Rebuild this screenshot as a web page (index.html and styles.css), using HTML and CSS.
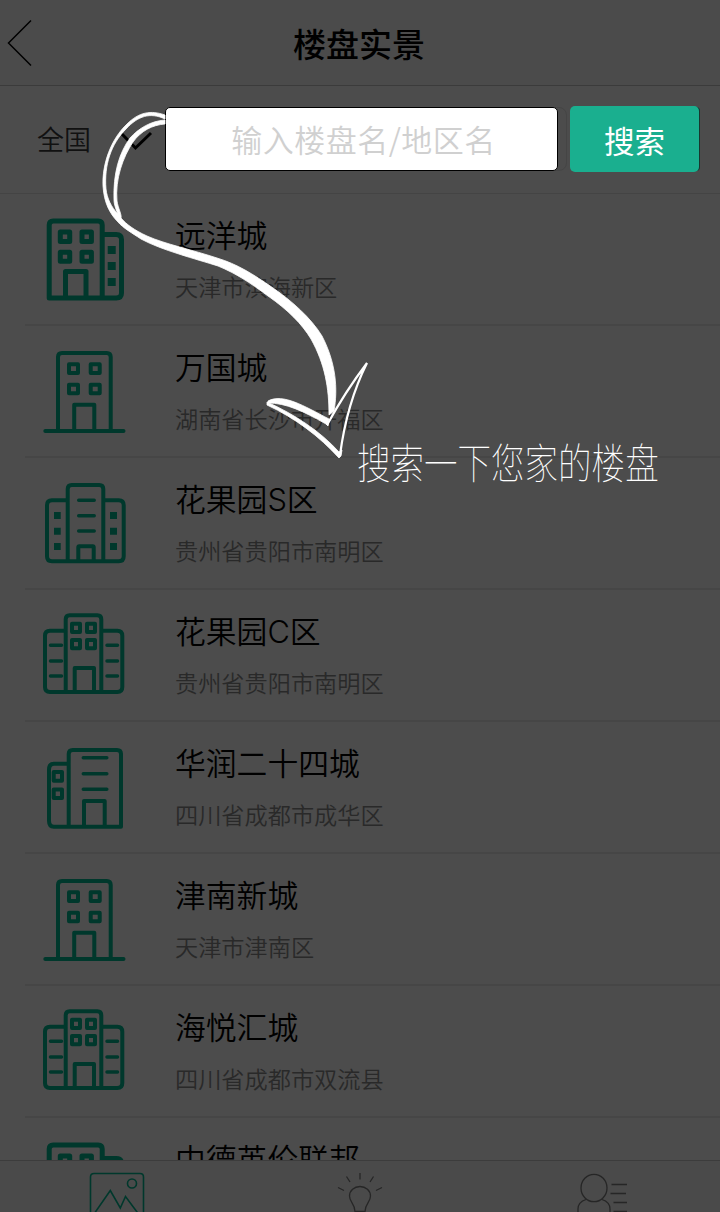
FILE: index.html
```
<!DOCTYPE html>
<html lang="zh-CN">
<head>
<meta charset="utf-8">
<title>楼盘实景</title>
<link rel="stylesheet" href="styles.css">
</head>
<body>
<svg class="symbols" aria-hidden="true">
  <symbol id="annex" viewBox="0 0 88 88"><path d="M8.200 84V11q0-4 4-4h45q4 0 4 4v73M61.200 20.500h14q5.300 0 5.300 5V79q0 5-5.300 5H11q-2.800 0-2.800-2M24.500 84V57.500H45V84"/><path d="M19.300 18h9.400v9.400h-9.400zM41 18h9.400v9.400H41zM19.300 38.200h9.400v9h-9.400zM41 38.200h9.400v9H41z"/><path class="solid" d="M66.700 32h8v8h-8zM66.700 48h8v8h-8zM66.700 64h8v8h-8z"/></symbol>
  <symbol id="tower" viewBox="0 0 88 88"><path class="thin" d="M4.300 85h78.200M17 85V11q0-4 4-4h44.700q4 0 4 4v74M33.200 85V58.700h20.100V85M28 18.300h9v8.700h-9zM49.700 18.300h9v8.700h-9zM28 38.700h9v8.600h-9zM49.700 38.700h9v8.600h-9z"/></symbol>
  <symbol id="triple" viewBox="0 0 88 88"><path class="thin" d="M26.700 83V11q0-4 4-4h27.600q4 0 4 4v72M26.700 22.300H11q-5 0-5 5v51q0 5 5 5h66.700q5 0 5-5v-51q0-5-5-5H62.300M37.300 83V69.300q0-1 1-1h13.400q1 0 1 1V83"/><path class="line" d="M37.700 22.300h15.500M37.700 37.700h15.500M37.700 53h15.500"/><path class="solid" d="M13 34h6.700v7H13zM13 49.700h6.700v7H13zM13 65h6.700v7H13zM69 34h7v7h-7zM69 49.700h7v7h-7zM69 65h7v7h-7z"/></symbol>
  <symbol id="wings" viewBox="0 0 88 88"><path class="thin" d="M24.700 82V9.300q0-4 4-4h27.600q4 0 4 4V82M24.700 20.700H9q-5 0-5 5V77q0 5 5 5h67.300q5 0 5-5V25.700q0-5-5-5h-16M33.700 82V58H53v24M31 13.700h8V22h-8zM46 13.700h8V22h-8zM31 30h8v8.300h-8zM46 30h8v8.300h-8z"/><path class="line" d="M9.500 35.300h11M9.500 51h11M9.500 66h11M66 35.300h10.500M66 51h10.500M66 66h10.500"/></symbol>
  <symbol id="office" viewBox="0 0 88 88"><path class="thin" d="M27.700 84V12q0-4 4-4H76q4 0 4 4v72.700H13q-5 0-5-6v-51q0-6 5-6h14.700M43 84V59h20.700v25M12.700 30h8.300v8.700h-8.300zM12.700 47.500h8.300V56h-8.300z"/><path class="line" d="M42.300 15.700h23.500M42.300 31.700h23.500M42.300 47.300h23.500"/></symbol>
</svg>
<div class="screen">
  <header class="header">
    <svg class="back" viewBox="0 0 40 60"><path d="M31 7.500L8.500 30L31 52.500"/></svg>
    <h1 class="title">楼盘实景</h1>
  </header>
  <div class="search">
    <span class="region">全国</span>
    <svg class="chevron" viewBox="0 0 36 24"><path d="M3 4l14.500 15L33 4"/></svg>
    <div class="field"><input class="input" placeholder="输入楼盘名/地区名" aria-label="搜索楼盘"></div>
    <button class="submit">搜索</button>
  </div>
  <main class="list">
    <div class="item"><svg class="building"><use href="#annex"/></svg><div><div class="name">远洋城</div><div class="place">天津市滨海新区</div></div></div>
    <div class="item"><svg class="building"><use href="#tower"/></svg><div><div class="name">万国城</div><div class="place">湖南省长沙市开福区</div></div></div>
    <div class="item"><svg class="building"><use href="#triple"/></svg><div><div class="name">花果园S区</div><div class="place">贵州省贵阳市南明区</div></div></div>
    <div class="item"><svg class="building"><use href="#wings"/></svg><div><div class="name">花果园C区</div><div class="place">贵州省贵阳市南明区</div></div></div>
    <div class="item"><svg class="building"><use href="#office"/></svg><div><div class="name">华润二十四城</div><div class="place">四川省成都市成华区</div></div></div>
    <div class="item"><svg class="building"><use href="#tower"/></svg><div><div class="name">津南新城</div><div class="place">天津市津南区</div></div></div>
    <div class="item"><svg class="building"><use href="#wings"/></svg><div><div class="name">海悦汇城</div><div class="place">四川省成都市双流县</div></div></div>
    <div class="item"><svg class="building"><use href="#annex"/></svg><div><div class="name">中德英伦联邦</div></div></div>
  </main>
  <nav class="tabs">
    <svg class="tab active" viewBox="0 0 240 51"><path d="M90.500 60V16q0-3.500 3.500-3.500h46q3.500 0 3.500 3.500v44M94 53l16.300-23.500 10 17.500 5.200-11.500L140 55"/><circle cx="132" cy="22.500" r="4.500"/></svg>
    <svg class="tab" viewBox="0 0 240 51"><path d="M115 50.500c0-8-5.500-9-5.500-15.500a10.500 9.500 0 0 1 21 0c0 6.500-5.500 7.500-5.500 15.500zM120 12v6.500M106.500 15.500l3.500 5.500M133.500 15.500L130 21M98 26.500l6 3M142 26.500l-6 3"/></svg>
    <svg class="tab" viewBox="0 0 240 51"><ellipse cx="114" cy="27" rx="13" ry="13.700"/><path d="M98 60V48q0-7 8-9.500M130 60V48q0-7-8-9.500M131.500 23.500H147M130.500 32.500H146M133.500 41.500H147M133.500 50.500H147"/></svg>
  </nav>
  <div class="guide">
    <svg class="arrow" viewBox="0 0 720 500">
      <path d="M165 115C151 110 139 112 127 124C111 139 102 164 103 186C104 203 110 214 118 222C123 228 132 233 141 239C161 250 196 259 218 266C237 274 249 282 268 296C288 310 302 324 311 339C325 364 329 388 329 415L334 411C338 389 336 363 322 336C311 318 292 301 273 288C253 274 237 264 217 258C193 250 165 244 147 236C134 230 126 224 121 218C122 215 118 208 117 201C115 179 123 157 133 142C141 131 152 125 165 124V120C151 121 139 128 130 138C119 153 113 174 114 200C114 205 117 212 118 214C111 207 107 198 106 189C104 165 111 144 126 129C138 116 150 112 165 119Z"/>
      <path d="M268 401C283 393 304 406 329 419L328 426L326 424C303 411 286 403 268 403Z"/>
      <path d="M267 402C294 414 320 431 339 452L342 450L341 456L339 458C319 436 295 418 267 405Z"/>
      <path class="sketch" d="M327 425Q345 392 367 363C352 393 344 425 340 455"/>
    </svg>
    <div class="hint">搜索一下您家的楼盘</div>
  </div>
</div>
</body>
</html>
```
FILE: styles.css
```
* { box-sizing: border-box; }
body { margin: 0; background: #4c4c4c; font-family: Inter, "Noto Sans CJK SC", sans-serif; }
.symbols { position: absolute; width: 0; height: 0; }
.screen { position: relative; width: 720px; height: 1212px; overflow: hidden; display: flex; flex-direction: column; background: #4c4c4c; }
svg { fill: none; }
.header { height: 86px; flex: none; display: grid; grid-template-columns: 40px 1fr 40px; align-items: center; border-bottom: 1px solid #3b3b3b; background: #4b4b4b; }
.back { width: 40px; height: 60px; stroke: #000; stroke-width: 1.5; }
.title { margin: 4px 2px 0 0; font-size: 33px; line-height: 48px; font-weight: 500; text-align: center; color: #000; }
.search { height: 108px; flex: none; display: flex; align-items: center; padding: 0 0 2px 37px; border-bottom: 1px solid #444; }
.region { width: 81px; padding-top: 4px; font-size: 27px; line-height: 40px; color: #111; font-weight: 350; }
.chevron { width: 36px; height: 24px; margin: 4px 11px 0 0; stroke: #000; stroke-width: 3; }
.field { width: 402px; height: 64px; border: 1px solid #454545; border-radius: 8px; margin-right: 3px; }
.input { display: block; width: 393px; height: 64px; margin: -1px 0 0 -1px; border: 1px solid #000; border-radius: 5px; padding: 0 0 0 4px; background: #fff; font: 350 31px "Noto Sans CJK SC", sans-serif; letter-spacing: .5px; text-align: center; }
.input::placeholder { color: #d0d0d0; opacity: 1; }
.submit { width: 129px; height: 66px; padding: 2px 0 0; border: 0; border-radius: 5px; background: #1aaf8f; box-shadow: 2px 0 0 -1px #17382f; font: 400 30.500px/40px "Noto Sans CJK SC", sans-serif; color: #fff; }
.list { flex: 1; min-height: 0; overflow: hidden; padding-left: 25px; }
.item { height: 132px; display: flex; align-items: flex-start; padding: 20px 0 0 16px; border-bottom: 2px solid #464646; }
.building { flex: none; width: 88px; height: 88px; margin-right: 46px; stroke: #00382c; stroke-width: 5; stroke-linecap: round; stroke-linejoin: round; }
.thin { stroke-width: 4; }
.line { stroke-width: 3.500px; }
.solid { fill: #00382c; stroke: none; }
.name { font-size: 30.800px; line-height: 44px; font-weight: 350; color: #000; }
.place { margin-top: 13px; font-size: 23.200px; line-height: 34px; font-weight: 350; color: #292929; }
.tabs { height: 52px; flex: none; display: grid; grid-template-columns: repeat(3, 1fr); border-top: 1px solid #3c3c3c; background: #4a4a4a; }
.tab { width: 240px; height: 51px; stroke: #262626; stroke-width: 1.300; }
.active { stroke: #00382c; stroke-width: 1.600; }
.guide { position: absolute; inset: 0; pointer-events: none; }
.arrow { display: block; width: 720px; height: 500px; fill: #fff; stroke: #fff; stroke-width: .8; }
.sketch { fill: none; stroke: #fff; stroke-width: 2.200; }
.hint { position: absolute; left: 357px; top: 431px; font: 100 42px/60px "Noto Sans CJK SC", sans-serif; color: #fff; white-space: nowrap; transform: scaleX(.798); transform-origin: left; }
```
